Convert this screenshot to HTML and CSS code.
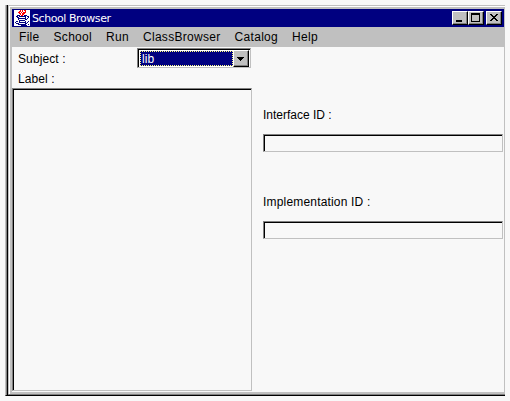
FILE: index.html
```html
<!DOCTYPE html>
<html lang="en">
<head>
<meta charset="utf-8">
<title>School Browser</title>
<link rel="stylesheet" href="styles.css">
</head>
<body>
<div class="shadow">
<div class="window">
  <header class="titlebar">
    <svg class="logo" width="16" height="16" viewBox="0 0 16 16" shape-rendering="crispEdges">
      <path fill="#fff" d="M0 0h16v16H0z"/>
      <path fill="none" stroke="#f00" d="M6 .5h1M8 .5h1M10 .5h2M5 1.5h2M8 1.5h1M11 1.5h1M4 2.5h2M7 2.5h1M9 2.5h3M5 3.5h2M8 3.5h3M6 4.5h1M8 4.5h2M7 5.5h2"/>
      <path fill="none" stroke="#000080" d="M3 5.5h3M10 5.5h3M2 6.5h2M5 6.5h7M13 6.5h2M3 7.5h2M11 7.5h1M14 7.5h1M4 8.5h8M13 8.5h1M4 9.5h1M11 9.5h2M5 10.5h6M2 11.5h2M5 11.5h1M11 11.5h1M14 11.5h1M1 12.5h1M5 12.5h7M13 12.5h1M2 13.5h3M11 13.5h2M4 14.5h8M14 14.5h1M7 15.5h6"/>
    </svg>
    <h1 class="title">School Browser</h1>
    <div class="controls">
      <button class="control" aria-label="Minimize"><svg width="15" height="13" shape-rendering="crispEdges"><path d="M4 9h6v2H4z"/></svg></button>
      <button class="control" aria-label="Maximize"><svg width="15" height="13" shape-rendering="crispEdges"><path fill-rule="evenodd" d="M3 2h9v9H3zM4 4v6h7V4z"/></svg></button>
      <button class="control close" aria-label="Close"><svg width="15" height="13" shape-rendering="crispEdges"><path d="M4 3h2v1H4zM10 3h2v1h-2zM5 4h2v1H5zM9 4h2v1H9zM6 5h4v1H6zM7 6h2v1H7zM6 7h4v1H6zM5 8h2v1H5zM9 8h2v1H9zM4 9h2v1H4zM10 9h2v1h-2z"/></svg></button>
    </div>
  </header>
  <nav class="menu">
    <span>File</span><span>School</span><span>Run</span><span>ClassBrowser</span><span>Catalog</span><span>Help</span>
  </nav>
  <main class="content">
    <section class="browser">
      <div class="subject">
        <span class="caption">Subject :</span>
        <div class="combo">
          <span class="choice">lib</span>
          <button class="drop" aria-label="Open list"><svg width="14" height="13" shape-rendering="crispEdges"><path d="M3 5h7v1H3zM4 6h5v1H4zM5 7h3v1H5zM6 8h1v1H6z"/></svg></button>
        </div>
      </div>
      <div class="label caption">Label :</div>
      <div class="list"></div>
    </section>
    <section class="details">
      <label class="name">Interface ID :</label>
      <div class="field"></div>
      <label class="name second">Implementation ID :</label>
      <div class="field"></div>
    </section>
  </main>
</div>
</div>
</body>
</html>
```
FILE: styles.css
```css
* { box-sizing: border-box; }
body {
  margin: 0;
  padding: 5px;
  width: 510px;
  height: 401px;
  overflow: hidden;
  background: #f8f8f8;
  color: #000;
  font: 12px/16px "Liberation Sans", Arial, sans-serif;
}
button { padding: 0; margin: 0; }
svg { display: block; }
.shadow {
  width: 500px;
  height: 391px;
  border-left: 1px solid #c0c0c0;
  border-bottom: 1px solid #000;
  box-shadow: inset 1px 0 #808080, inset 2px 0 #000;
  padding-left: 2px;
}
.window {
  height: 390px;
  display: flex;
  flex-direction: column;
  padding: 4px 1px 3px 4px;
  background: #c0c0c0;
  box-shadow: inset 0 -1px #808080, inset 1px 1px #c0c0c0, inset 2px 2px #fff;
}
.titlebar {
  height: 18px;
  display: flex;
  align-items: center;
  padding: 0 2px;
  background: #000080;
}
.title {
  margin: 0 auto 0 2px;
  padding-top: 2px;
  font: 400 11px/18px "DejaVu Sans", sans-serif;
  letter-spacing: -.43px;
  color: #fff;
}
.controls { display: flex; }
.control {
  width: 16px;
  height: 14px;
  background: #c0c0c0;
  border: 1px solid;
  border-color: #fff #000 #000 #fff;
  box-shadow: inset -1px -1px #808080;
}
.control svg { margin: -1px 0 0 -1px; }
.close { margin-left: 2px; }
.menu {
  height: 20px;
  display: flex;
  gap: 14px;
  padding: 2px 7px;
  letter-spacing: .3px;
}
.content {
  flex: 1;
  display: flex;
  background: #f8f8f8;
}
.browser {
  width: 240px;
  display: flex;
  flex-direction: column;
  padding-bottom: 1px;
}
.caption { letter-spacing: .1px; padding-left: 6px; }
.subject {
  height: 22px;
  display: flex;
  justify-content: space-between;
  padding: 1px 1px 0 0;
}
.subject .caption { padding-top: 3px; }
.combo {
  width: 114px;
  height: 20px;
  display: flex;
  padding: 1px;
  background: #fff;
  border: 1px solid;
  border-color: #808080 #c0c0c0 #c0c0c0 #808080;
  box-shadow: inset 1px 1px #000;
}
.choice {
  width: 94px;
  height: 15px;
  margin: 1px 0 0 1px;
  padding-left: 1px;
  background: #000080;
  border: 1px dotted #ffff7f;
  color: #fff;
  line-height: 14px;
  letter-spacing: .1px;
}
.drop {
  width: 16px;
  height: 17px;
  margin-left: auto;
  background: #c0c0c0;
  border: 1px solid;
  border-color: #fff #000 #000 #fff;
  box-shadow: inset -1px -1px #808080;
}
.label { height: 19px; padding-top: 2px; }
.list {
  flex: 1;
  border: 1px solid;
  border-color: #808080 #c0c0c0 #c0c0c0 #808080;
  box-shadow: inset 1px 1px #000;
}
.details {
  flex: 1;
  display: flex;
  flex-direction: column;
  padding: 60px 1px 0 11px;
}
.name { height: 27px; letter-spacing: 0; }
.second { margin-top: 42px; letter-spacing: .18px; }
.field {
  height: 18px;
  border: 1px solid;
  border-color: #808080 #c0c0c0 #c0c0c0 #808080;
  box-shadow: inset 1px 1px #000;
}
```
